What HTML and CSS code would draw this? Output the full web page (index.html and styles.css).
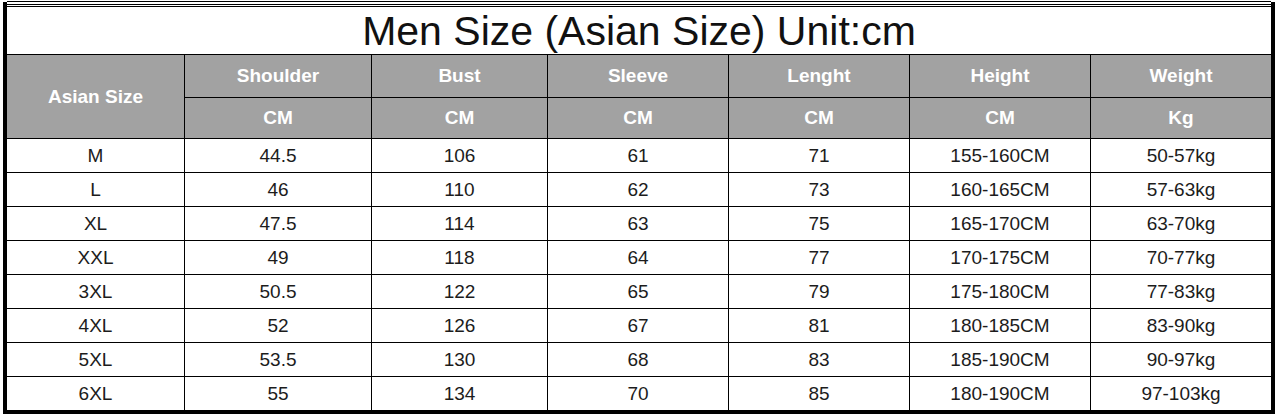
FILE: index.html
```html
<!DOCTYPE html>
<html>
<head>
<meta charset="utf-8">
<link rel="stylesheet" href="styles.css">
</head>
<body>
<div class="sheet">
  <div class="rules"><div class="rule-mid"></div></div>
  <div class="frame">
    <div class="grid">
      <div class="title">Men Size (Asian Size) Unit:cm</div>
      <div class="hd span2">Asian Size</div>
      <div class="hd">Shoulder</div>
      <div class="hd">Bust</div>
      <div class="hd">Sleeve</div>
      <div class="hd">Lenght</div>
      <div class="hd">Height</div>
      <div class="hd">Weight</div>
      <div class="hd">CM</div>
      <div class="hd">CM</div>
      <div class="hd">CM</div>
      <div class="hd">CM</div>
      <div class="hd">CM</div>
      <div class="hd">Kg</div>

      <div class="td">M</div><div class="td">44.5</div><div class="td">106</div><div class="td">61</div><div class="td">71</div><div class="td">155-160CM</div><div class="td">50-57kg</div>
      <div class="td">L</div><div class="td">46</div><div class="td">110</div><div class="td">62</div><div class="td">73</div><div class="td">160-165CM</div><div class="td">57-63kg</div>
      <div class="td">XL</div><div class="td">47.5</div><div class="td">114</div><div class="td">63</div><div class="td">75</div><div class="td">165-170CM</div><div class="td">63-70kg</div>
      <div class="td">XXL</div><div class="td">49</div><div class="td">118</div><div class="td">64</div><div class="td">77</div><div class="td">170-175CM</div><div class="td">70-77kg</div>
      <div class="td">3XL</div><div class="td">50.5</div><div class="td">122</div><div class="td">65</div><div class="td">79</div><div class="td">175-180CM</div><div class="td">77-83kg</div>
      <div class="td">4XL</div><div class="td">52</div><div class="td">126</div><div class="td">67</div><div class="td">81</div><div class="td">180-185CM</div><div class="td">83-90kg</div>
      <div class="td">5XL</div><div class="td">53.5</div><div class="td">130</div><div class="td">68</div><div class="td">83</div><div class="td">185-190CM</div><div class="td">90-97kg</div>
      <div class="td">6XL</div><div class="td">55</div><div class="td">134</div><div class="td">70</div><div class="td">85</div><div class="td">180-190CM</div><div class="td">97-103kg</div>
    </div>
  </div>
</div>
</body>
</html>
```

FILE: styles.css
```css
html, body {
  margin: 0;
  padding: 0;
  background: #ffffff;
}

body {
  width: 1278px;
  height: 418px;
  overflow: hidden;
  font-family: "Liberation Sans", Arial, sans-serif;
}

.sheet {
  padding-top: 1px;
  margin-left: 3px;
  width: 1272px;
}

.rules {
  margin-left: 4px;
  margin-right: 4px;
  height: 4px;
  border-top: 1px solid #000;
  border-bottom: 1px solid #000;
  display: flex;
  align-items: center;
}

.rule-mid {
  height: 1px;
  width: 100%;
  background: #000;
  margin-top: 1px;
}

.frame {
  border-left: 4px solid #000;
  border-right: 4px solid #000;
  border-bottom: 4px solid #000;
  margin-top: -5px;
  padding-top: 5px;
}

.grid {
  display: grid;
  grid-template-columns: 177px 186px 175px 180px 180px 180px 180px;
  grid-template-rows: 47px 42px 40px repeat(8, 33px);
  gap: 1px;
  background: #000;
}

.title {
  grid-column: 1 / -1;
  background: #fff;
  color: #111;
  font-size: 41px;
  display: flex;
  align-items: center;
  justify-content: center;
  padding-top: 1px;
}

.hd {
  background: #a2a2a2;
  color: #fff;
  font-weight: bold;
  font-size: 19px;
  display: flex;
  align-items: center;
  justify-content: center;
}

.span2 {
  grid-row: span 2;
}

.td {
  background: #fff;
  color: #1c1c1c;
  font-size: 19px;
  display: flex;
  align-items: center;
  justify-content: center;
}
```
